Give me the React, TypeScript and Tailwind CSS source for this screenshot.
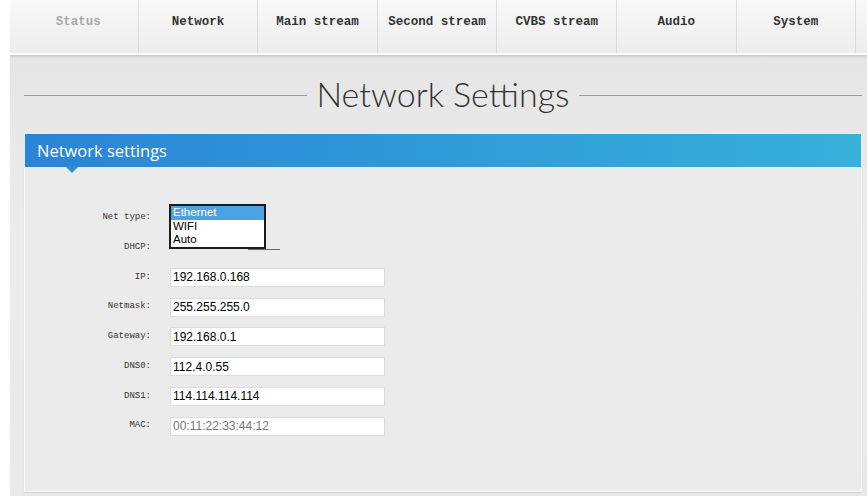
import React from "react"

const tabs = ["Status", "Network", "Main stream", "Second stream", "CVBS stream", "Audio", "System"]

const fields = [
  { label: "IP", value: "192.168.0.168" },
  { label: "Netmask", value: "255.255.255.0" },
  { label: "Gateway", value: "192.168.0.1" },
  { label: "DNS0", value: "112.4.0.55" },
  { label: "DNS1", value: "114.114.114.114" },
  { label: "MAC", value: "00:11:22:33:44:12", readOnly: true },
]

function Label({ children }: { children: React.ReactNode }) {
  return (
    <div className="w-[127px] shrink-0 text-right pr-[1px] font-['Liberation_Mono',monospace] text-[9px] text-[#333]">
      {children}
    </div>
  )
}

export default function App() {
  return (
    <div className="flex h-[496px] w-full overflow-hidden bg-white">
      <div className="w-[10px] shrink-0 bg-white" />
      <div className="flex flex-1 flex-col bg-gradient-to-b from-[#e4e4e4] via-[#ececec] to-[#e9e9e9]">
        {/* Top navigation */}
        <nav className="flex h-[53px] shrink-0 bg-gradient-to-b from-[#f8f8f8] to-[#ededed] pl-[9px]">
          {tabs.map((t, i) => (
            <div
              key={t}
              className={`flex w-[119.6px] shrink-0 items-center justify-center border-r border-[#dcdcdc] pb-[11px] pt-[2px] font-['Liberation_Mono',monospace] text-[12.5px] font-semibold ${
                i === 0 ? "text-[#a8a8a8]" : "text-[#333]"
              }`}
            >
              {t}
            </div>
          ))}
        </nav>
        <div className="h-[2px] shrink-0 bg-white" />
        <div className="h-[3px] shrink-0 bg-gradient-to-b from-[#c9c9c9] to-[#e2e2e2]" />

        {/* Page title */}
        <div className="flex h-[75px] shrink-0 items-center pl-[14px] pr-[5px]">
          <div className="h-px flex-1 bg-[#9c9c9c]" />
          <h1 className="px-[9px] pb-[3px] font-['Lato',sans-serif] text-[34px] font-light leading-none text-[#333]">
            Network Settings
          </h1>
          <div className="h-px flex-1 bg-[#9c9c9c]" />
        </div>

        {/* Settings panel */}
        <div className="ml-[14px] mr-[5px] flex flex-1 flex-col">
          <div className="relative h-[35px] shrink-0 border border-[#d8f2fb] bg-gradient-to-r from-[#2b84d6] to-[#36b1d9]">
            <div className="pl-[12px] pt-[5px] font-['Open_Sans',sans-serif] text-[16.5px] text-white">Network settings</div>
            <div className="absolute left-[41px] top-[33px] h-0 w-0 border-l-[6px] border-r-[6px] border-t-[6px] border-l-transparent border-r-transparent border-t-[#2f8fd7]" />
          </div>
          <div className="mb-[4px] flex flex-1 flex-col border-x border-b border-[#f7f7f7] bg-[#ebebeb] pt-[35px] shadow-[0_1px_1px_#d4d4d4]">
            <div className="relative flex flex-col">
              <div className="flex h-[29.75px] items-center">
                <Label>Net type:</Label>
                <div className="ml-[18px] h-[20px] w-[97px]" />
              </div>
              <div className="flex h-[29.75px] items-center">
                <Label>DHCP:</Label>
              </div>
              {fields.map((f) => (
                <div key={f.label} className="flex h-[29.75px] items-center">
                  <Label>{f.label}:</Label>
                  <input
                    readOnly
                    value={f.value}
                    className={`ml-[18px] h-[19px] w-[215px] border border-[#dcdcdc] bg-white px-[2px] font-['Liberation_Sans',Arial,sans-serif] text-[12px] outline-none ${
                      f.readOnly ? "text-[#777]" : "text-black"
                    }`}
                  />
                </div>
              ))}

              {/* Open Net type dropdown list, DHCP select edge peeking out below */}
              <div className="absolute left-[223px] top-[46px] h-px w-[32px] bg-[#666]" />
              <div className="absolute left-[144px] top-[1px] w-[97px] border-2 border-[#1c1c1c] bg-white font-['Liberation_Sans',Arial,sans-serif] text-[11.5px] leading-[13.5px] text-black">
                <div className="bg-[#4ba3e3] pl-[2px] text-white">Ethernet</div>
                <div className="pl-[2px]">WIFI</div>
                <div className="pl-[2px]">Auto</div>
              </div>
            </div>
          </div>
        </div>
      </div>
    </div>
  )
}
